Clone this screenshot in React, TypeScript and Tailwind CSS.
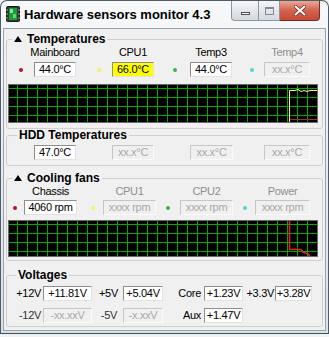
import React from "react";

const FONT = "font-['Liberation_Sans',Arial,sans-serif]";

type V = "on" | "off" | "y";

function Box({ cls, v = "on", children }: { cls: string; v?: V; children: React.ReactNode }) {
  if (v === "on")
    return (
      <div className={"h-[15px] shrink-0 flex items-center justify-center whitespace-nowrap text-[11px] leading-[13px] tracking-[-0.3px] bg-white text-black border border-t-[#8d8d8d] border-l-[#8d8d8d] border-r-[#e2e2e2] border-b-[#e2e2e2] " + cls}>
        {children}
      </div>
    );
  if (v === "y")
    return (
      <div className={"h-[15px] shrink-0 flex items-center justify-center whitespace-nowrap text-[11px] leading-[13px] tracking-[-0.3px] bg-[#ffff00] text-black border border-t-[#8d8d8d] border-l-[#8d8d8d] border-r-[#e2e2e2] border-b-[#e2e2e2] " + cls}>
        {children}
      </div>
    );
  return (
    <div className={"h-[15px] shrink-0 flex items-center justify-center whitespace-nowrap text-[11px] leading-[13px] tracking-[-0.3px] bg-transparent text-[#a8a8a8] border border-t-[#c6c6c6] border-l-[#c6c6c6] border-r-[#fbfbfb] border-b-[#fbfbfb] " + cls}>
      {children}
    </div>
  );
}

function Label({ cls, gray, children }: { cls: string; gray?: boolean; children: React.ReactNode }) {
  return (
    <div className={"shrink-0 flex justify-center whitespace-nowrap text-[11px] leading-[13px] tracking-[-0.3px] " + (gray ? "text-[#8e8e8e] " : "text-black ") + cls}>
      <span>{children}</span>
    </div>
  );
}

function Tri() {
  return (
    <svg width="8" height="6" viewBox="0 0 8 6" className="inline-block mr-[5px] align-[1px]">
      <path d="M0 6 L4 0 L8 6 Z" fill="#000" />
    </svg>
  );
}

function Graph({ w, h, kind }: { w: number; h: number; kind: "t" | "f" }) {
  const vx: number[] = [];
  for (let x = 8; x < w; x += 10) vx.push(x);
  const hy: number[] = [];
  for (let y = 3; y < h; y += 9) hy.push(y);
  return (
    <svg width={w} height={h} className="block">
      <rect x="0" y="0" width={w} height={h} fill="#000" />
      {vx.map((x) => (
        <line key={"v" + x} x1={x + 0.5} y1={0} x2={x + 0.5} y2={h} stroke="#00a800" strokeWidth="1" />
      ))}
      {hy.map((y) => (
        <line key={"h" + y} x1={0} y1={y + 0.5} x2={w} y2={y + 0.5} stroke="#00a800" strokeWidth="1" />
      ))}
      {kind === "t" ? (
        <>
          <polyline
            points={`280.5,${h} 280.5,5.5 286,5.5 289,4.5 292,6.5 295,5.5 298,6.5 301,5.5 305,5.5 ${w},5.5`}
            fill="none"
            stroke="#ffff90"
            strokeWidth="1"
          />
          <polyline points={`281,${h - 2.5} ${w},${h - 2.5}`} fill="none" stroke="#b02828" strokeWidth="1" />
        </>
      ) : (
        <polyline
          points={`280.5,0 280.5,28.5 292,28.5 294,31 299,33 301,${h}`}
          fill="none"
          stroke="#f02020"
          strokeWidth="1.5"
        />
      )}
    </svg>
  );
}

function Dot({ cls }: { cls: string }) {
  return <div className={"shrink-0 w-[4px] h-[4px] rounded-full " + cls} />;
}

export default function App() {
  return (
    <div className={"w-[329px] h-[337px] bg-[#f2f2f2] overflow-hidden " + FONT}>
      <div className="h-[334px] flex flex-col border border-[#4f5b66] border-b-[#2f5568] rounded-t-[7px] bg-gradient-to-b from-[#f7f8fa] via-[#e9ecef] to-[#dde1e6]">
        {/* Title bar */}
        <div className="h-[27px] flex items-start shrink-0">
          <svg width="14" height="16" viewBox="0 0 14 16" className="ml-[5px] mt-[5px] shrink-0">
            <rect x="0.5" y="0.5" width="13" height="15" rx="1" fill="#2f3a33" stroke="#1a1a1a" />
            <rect x="3" y="2" width="8" height="12" fill="#1f9a3a" />
            <rect x="4" y="3" width="3" height="4" fill="#7cf08a" />
            <rect x="7" y="8" width="3" height="4" fill="#5ad86c" />
            <line x1="0" y1="4" x2="2" y2="4" stroke="#9a9a9a" />
            <line x1="0" y1="8" x2="2" y2="8" stroke="#9a9a9a" />
            <line x1="0" y1="12" x2="2" y2="12" stroke="#9a9a9a" />
            <line x1="12" y1="4" x2="14" y2="4" stroke="#9a9a9a" />
            <line x1="12" y1="8" x2="14" y2="8" stroke="#9a9a9a" />
            <line x1="12" y1="12" x2="14" y2="12" stroke="#9a9a9a" />
          </svg>
          <div className="ml-[4px] mt-[6px] text-[13px] leading-[16px] font-bold text-black whitespace-nowrap">
            Hardware sensors monitor 4.3
          </div>
          <div className="ml-auto mr-[8px] flex items-start">
            <div className="w-[28px] h-[20px] rounded-bl-[4px] border border-[#8b96a3] border-t-0 bg-gradient-to-b from-[#f4f6f8] to-[#d4d9df] flex items-center justify-center">
              <div className="w-[9px] h-[3px] mt-[6px] border border-[#4a4a4a] bg-white" />
            </div>
            <div className="w-[21px] h-[20px] border-b border-r border-[#8b96a3] bg-gradient-to-b from-[#f4f6f8] to-[#d4d9df] flex items-center justify-center">
              <div className="w-[9px] h-[8px] border border-[#8a8a8a] border-t-2" />
            </div>
            <div className="w-[40px] h-[20px] rounded-br-[4px] border border-[#7a2a22] border-t-0 border-l-0 bg-gradient-to-b from-[#e8a898] via-[#d4604e] to-[#c84a38] flex items-center justify-center">
              <svg width="12" height="11" viewBox="0 0 12 11">
                <path d="M1.5 1.5 L10.5 9.5 M10.5 1.5 L1.5 9.5" stroke="#6a2a22" strokeWidth="3.4" strokeLinecap="round" />
                <path d="M1.5 1.5 L10.5 9.5 M10.5 1.5 L1.5 9.5" stroke="#ffffff" strokeWidth="2" strokeLinecap="round" />
              </svg>
            </div>
          </div>
        </div>

        {/* Client */}
        <div className="flex-1 mx-[2px] mb-[2px] bg-[#f0f0f0] border border-[#98a2ad] px-[2px] flex flex-col text-black">
          {/* Temperatures */}
          <fieldset className="mt-[4px] border border-[#cfcfcf] rounded-[3px] pb-[5px]">
            <legend className="ml-[5px] px-[2px] text-[12px] leading-[12px] font-bold whitespace-nowrap">
              <Tri />
              Temperatures
            </legend>
            <div className="flex mt-[1px]">
              <Label cls="w-[42px] ml-[27px]">Mainboard</Label>
              <Label cls="w-[42px] ml-[36px]">CPU1</Label>
              <Label cls="w-[42px] ml-[36px]">Temp3</Label>
              <Label cls="w-[46px] ml-[32px]" gray>
                Temp4
              </Label>
            </div>
            <div className="flex items-center mt-[3px]">
              <Dot cls="ml-[12px] bg-[#b8102c]" />
              <Box cls="w-[42px] ml-[11px]">44.0°C</Box>
              <Dot cls="ml-[21px] bg-[#f4f45a]" />
              <Box cls="w-[42px] ml-[11px]" v="y">
                66.0°C
              </Box>
              <Dot cls="ml-[19px] bg-[#3cb44a]" />
              <Box cls="w-[42px] ml-[13px]">44.0°C</Box>
              <Dot cls="ml-[18px] bg-[#48d8d8]" />
              <Box cls="w-[46px] ml-[10px]" v="off">
                xx.x°C
              </Box>
            </div>
            <div className="mt-[7px] ml-[1px] w-[310px] h-[39px] border border-[#6a6a6a]">
              <Graph w={308} h={37} kind="t" />
            </div>
          </fieldset>

          {/* HDD Temperatures */}
          <fieldset className="mt-0 border border-[#cfcfcf] rounded-[3px] pb-[5px]">
            <legend className="ml-[10px] px-[2px] text-[12px] leading-[12px] font-bold whitespace-nowrap">HDD Temperatures</legend>
            <div className="flex items-center mt-[4px]">
              <Box cls="w-[42px] ml-[27px]">47.0°C</Box>
              <Box cls="w-[42px] ml-[36px]" v="off">
                xx.x°C
              </Box>
              <Box cls="w-[43px] ml-[36px]" v="off">
                xx.x°C
              </Box>
              <Box cls="w-[46px] ml-[31px]" v="off">
                xx.x°C
              </Box>
            </div>
          </fieldset>

          {/* Cooling fans */}
          <fieldset className="mt-[6px] border border-[#cfcfcf] rounded-[3px] pb-[3px]">
            <legend className="ml-[5px] px-[2px] text-[12px] leading-[12px] font-bold whitespace-nowrap">
              <Tri />
              Cooling fans
            </legend>
            <div className="flex mt-[1px]">
              <Label cls="w-[53px] ml-[17px]">Chassis</Label>
              <Label cls="w-[53px] ml-[26px]" gray>
                CPU1
              </Label>
              <Label cls="w-[53px] ml-[24px]" gray>
                CPU2
              </Label>
              <Label cls="w-[55px] ml-[22px]" gray>
                Power
              </Label>
            </div>
            <div className="flex items-center mt-[2px]">
              <Dot cls="ml-[6px] bg-[#b8102c]" />
              <Box cls="w-[53px] ml-[7px]">4060 rpm</Box>
              <Dot cls="ml-[14px] bg-[#f4f45a]" />
              <Box cls="w-[53px] ml-[8px]" v="off">
                xxxx rpm
              </Box>
              <Dot cls="ml-[10px] bg-[#3cb44a]" />
              <Box cls="w-[53px] ml-[10px]" v="off">
                xxxx rpm
              </Box>
              <Dot cls="ml-[10px] bg-[#48d8d8]" />
              <Box cls="w-[55px] ml-[8px]" v="off">
                xxxx rpm
              </Box>
            </div>
            <div className="mt-[5px] ml-[1px] w-[310px] h-[37px] border border-[#6a6a6a]">
              <Graph w={308} h={35} kind="f" />
            </div>
          </fieldset>

          {/* Voltages */}
          <fieldset className="mt-[8px] border border-[#cfcfcf] rounded-[3px] pb-[3px]">
            <legend className="ml-[9px] px-[2px] text-[12px] leading-[12px] font-bold whitespace-nowrap">Voltages</legend>
            <div className="flex items-center mt-[5px] text-[11px] leading-[13px] tracking-[-0.3px]">
              <div className="w-[26px] ml-[8px] text-right whitespace-nowrap">+12V</div>
              <Box cls="w-[49px] ml-[2px]">+11.81V</Box>
              <div className="w-[18px] ml-[7px] text-right whitespace-nowrap">+5V</div>
              <Box cls="w-[40px] ml-[6px]">+5.04V</Box>
              <div className="w-[24px] ml-[14px] text-right whitespace-nowrap">Core</div>
              <Box cls="w-[39px] ml-[3px]">+1.23V</Box>
              <div className="w-[30px] ml-[1px] text-right whitespace-nowrap">+3.3V</div>
              <Box cls="w-[37px] ml-[1px]">+3.28V</Box>
            </div>
            <div className="flex items-center mt-[7px] text-[11px] leading-[13px] tracking-[-0.3px]">
              <div className="w-[26px] ml-[8px] text-right whitespace-nowrap text-[#333]">-12V</div>
              <Box cls="w-[49px] ml-[2px]" v="off">
                -xx.xxV
              </Box>
              <div className="w-[18px] ml-[7px] text-right whitespace-nowrap text-[#333]">-5V</div>
              <Box cls="w-[40px] ml-[6px]" v="off">
                -x.xxV
              </Box>
              <div className="w-[24px] ml-[14px] text-right whitespace-nowrap">Aux</div>
              <Box cls="w-[39px] ml-[3px]">+1.47V</Box>
            </div>
          </fieldset>
        </div>
      </div>
    </div>
  );
}
